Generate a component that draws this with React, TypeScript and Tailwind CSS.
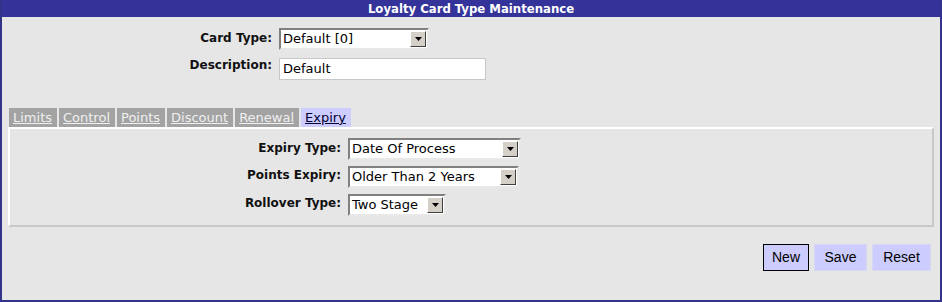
const label = "font-['DejaVu_Sans',sans-serif] text-[12px] font-bold text-[#111] text-right";

const FakeSelect = ({ value, width }: { value: string; width: string }) => (
    <div
        className={`${width} h-[22px] flex items-stretch bg-white border-2 border-t-[#808080] border-l-[#808080] border-b-[#e8e8e8] border-r-[#e8e8e8]`}
    >
        <div className="flex-1 min-w-0 flex items-center pl-[2px] font-['DejaVu_Sans',sans-serif] text-[13px] text-black whitespace-nowrap overflow-hidden">
            {value}
        </div>
        <div className="w-[16px] m-[1px] flex items-center justify-center bg-[#d4d0c8] border border-t-white border-l-white border-b-[#404040] border-r-[#404040]">
            <svg width="7" height="4" viewBox="0 0 7 4">
                <path d="M0 0h7L3.5 4z" fill="#000" />
            </svg>
        </div>
    </div>
);

const tabs = ["Limits", "Control", "Points", "Discount", "Renewal", "Expiry"];

export default function App() {
    return (
        <div className="w-[942px] h-[302px] flex flex-col bg-[#e6e6e6] border-x-2 border-b-2 border-[#33338a]">
            <div className="h-[17px] shrink-0 bg-[#333399] flex items-center justify-center text-white font-['DejaVu_Sans_Condensed','DejaVu_Sans',sans-serif] font-bold text-[13px]">
                Loyalty Card Type Maintenance
            </div>

            <div className="flex flex-col gap-[8px] pt-[11px]">
                <div className="flex items-start gap-[7px]">
                    <div className={`${label} w-[270px] pt-[1px]`}>Card Type:</div>
                    <FakeSelect value="Default [0]" width="w-[150px]" />
                </div>
                <div className="flex items-start gap-[7px]">
                    <div className={`${label} w-[270px] -mt-[2px]`}>Description:</div>
                    <div className="w-[207px] h-[22px] bg-white border border-[#c8c8c8] flex items-center pl-[3px] font-['DejaVu_Sans',sans-serif] text-[13px] text-black">
                        Default
                    </div>
                </div>
            </div>

            <div className="flex gap-[2px] pl-[7px] mt-[28px] h-[19px]">
                {tabs.map((t) => (
                    <div
                        key={t}
                        className={`pl-[4px] pr-[5px] flex items-center font-['DejaVu_Sans',sans-serif] text-[13px] underline ${
                            t === "Expiry" ? "bg-[#ccccff] text-[#000033]" : "bg-[#a3a3a3] text-[#f0f0f0]"
                        }`}
                    >
                        {t}
                    </div>
                ))}
            </div>

            <div className="mx-[6px] h-[100px] border-2 border-t-white border-l-white border-b-[#c8c8c8] border-r-[#c8c8c8] flex flex-col gap-[6px] pt-[9px]">
                <div className="flex items-start gap-[7px]">
                    <div className={`${label} w-[331px] pt-[1px]`}>Expiry Type:</div>
                    <FakeSelect value="Date Of Process" width="w-[173px]" />
                </div>
                <div className="flex items-start gap-[7px]">
                    <div className={`${label} w-[331px] pt-[0px]`}>Points Expiry:</div>
                    <FakeSelect value="Older Than 2 Years" width="w-[171px]" />
                </div>
                <div className="flex items-start gap-[7px]">
                    <div className={`${label} w-[331px] pt-[0px]`}>Rollover Type:</div>
                    <FakeSelect value="Two Stage" width="w-[98px]" />
                </div>
            </div>

            <div className="flex justify-end gap-[5px] pr-[9px] mt-[17px]">
                <button className="h-[27px] w-[46px] bg-[#ccccff] border border-black font-['Liberation_Sans',sans-serif] text-[14px] text-black">
                    New
                </button>
                <button className="h-[27px] w-[53px] bg-[#ccccff] border border-[#d8d8f0] font-['Liberation_Sans',sans-serif] text-[14px] text-black">
                    Save
                </button>
                <button className="h-[27px] w-[59px] bg-[#ccccff] border border-[#d8d8f0] font-['Liberation_Sans',sans-serif] text-[14px] text-black">
                    Reset
                </button>
            </div>
        </div>
    );
}
